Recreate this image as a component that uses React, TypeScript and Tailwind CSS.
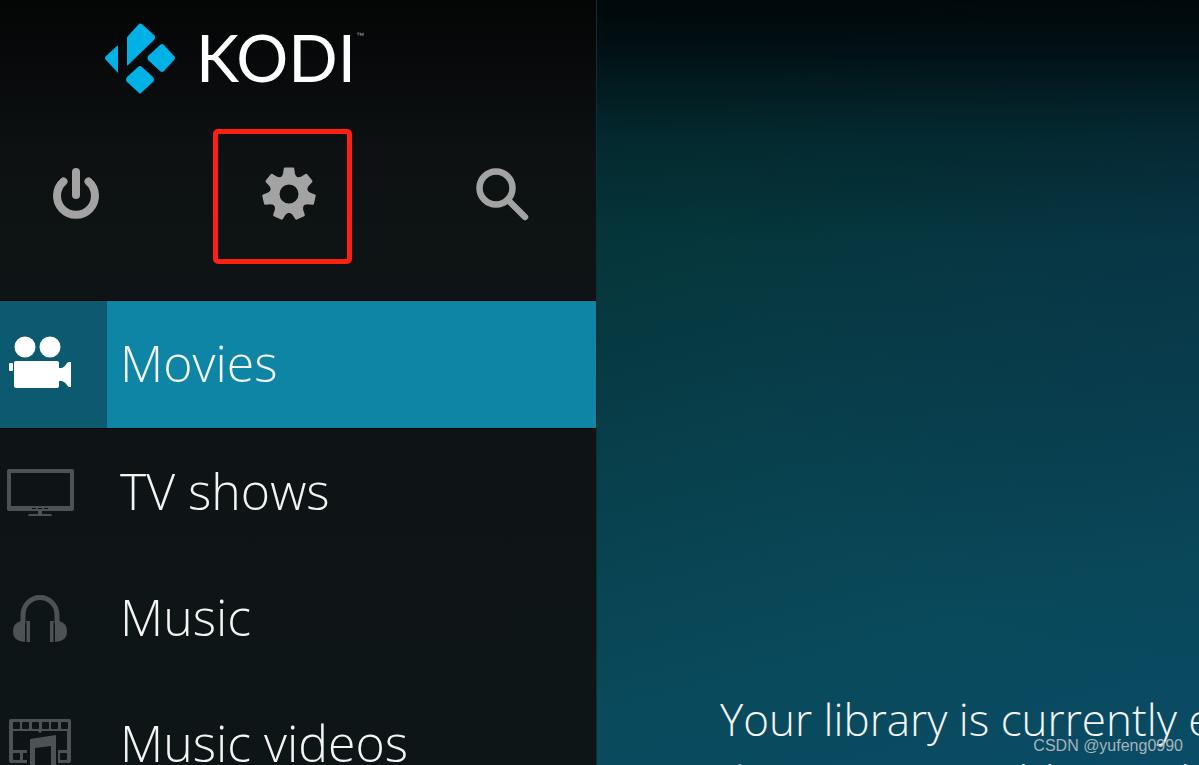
import type { ReactNode } from "react";

const navItems = [
  { label: "Movies", icon: <MovieIcon />, active: true },
  { label: "TV shows", icon: <TvIcon />, active: false },
  { label: "Music", icon: <HeadphonesIcon />, active: false },
  { label: "Music videos", icon: <MusicVideoIcon />, active: false },
];

function KodiMark() {
  return (
    <svg viewBox="0 0 72 72" className="size-[72px]" fill="#00b1e6" aria-hidden="true">
      <path d="M23 43V16Q23 15 24 14L34 3Q36 0 39 3L50 13Q52 15 50 18L24 43Q23 44 23 43Z" />
      <path d="M14 24V51L2 38Q0 36 2 34L13 24Q14 23 14 24Z" />
      <path d="M44 34L56 23Q58 21 60 23L70 34Q72 36 70 38L60 49Q58 51 56 49L44 38Q43 36 44 34Z" />
      <path d="M23 55L34 45Q36 43 38 45L49 55Q51 58 49 60L38 70Q36 73 34 70L23 60Q21 58 23 55Z" />
    </svg>
  );
}

function PowerIcon() {
  return (
    <svg viewBox="0 0 54 54" className="size-[54px]" fill="none" stroke="#a3a3a3" strokeWidth="8" strokeLinecap="round" aria-hidden="true">
      <path d="M27 5V28" />
      <path d="M14.500 14.500A19 19 0 1 0 39.500 14.500" />
    </svg>
  );
}

function GearIcon() {
  const teeth = [0, 1, 2, 3, 4, 5, 6];
  return (
    <svg viewBox="-27 -27 54 54" className="size-[54px]" fill="#a3a3a3" aria-hidden="true">
      <circle r="14" fill="none" stroke="#a3a3a3" strokeWidth="9" />
      {teeth.map((tooth) => (
        <path
          key={tooth}
          d="M-9 -16Q-6.500 -18 -6 -20L-5.300 -25.300Q-5.100 -26.500 -4 -26.500H4Q5.100 -26.500 5.300 -25.300L6 -20Q6.500 -18 9 -16Z"
          transform={`rotate(${(tooth * 360) / 7})`}
        />
      ))}
    </svg>
  );
}

function SearchIcon() {
  return (
    <svg viewBox="0 0 54 54" className="size-[54px]" fill="none" stroke="#a3a3a3" aria-hidden="true">
      <circle cx="21" cy="21" r="16.500" strokeWidth="6.500" />
      <path d="M33 33L50 50" strokeWidth="6.500" strokeLinecap="round" />
    </svg>
  );
}

function MovieIcon() {
  return (
    <svg viewBox="0 0 80 80" className="size-20" fill="#fff" aria-hidden="true">
      <circle cx="25" cy="22" r="10.500" />
      <circle cx="50" cy="22" r="10.500" />
      <rect x="14" y="36" width="45" height="27" rx="2" />
      <rect x="9" y="38" width="4" height="8" rx="1" />
      <path d="M58 43H61Q64 43 67 38Q68 37 69 37H71V62H69Q68 62 67 60Q64 56 61 56H58Z" />
    </svg>
  );
}

function TvIcon() {
  return (
    <svg viewBox="0 0 80 80" className="size-20" fill="#4d5254" aria-hidden="true">
      <path fillRule="evenodd" d="M9 17H72Q74 17 74 19V57Q74 59 72 59H9Q7 59 7 57V19Q7 17 9 17ZM11 21V54H70V21Z" />
      <path d="M38 58H42V62H50Q52 62 52 64H28Q28 62 30 62H38Z" />
      <path d="M32 56.500H36M38 56.500H42M44 56.500H48" stroke="#0e1415" />
    </svg>
  );
}

function HeadphonesIcon() {
  return (
    <svg viewBox="0 0 80 80" className="size-20" fill="#4d5254" aria-hidden="true">
      <path d="M23 46V37A17 17.500 0 0 1 57 37V46" fill="none" stroke="#4d5254" strokeWidth="5" />
      <path d="M25 43V64Q13 63 13 53.500Q13 45 21 43Z" />
      <path d="M55 43V64Q67 63 67 53.500Q67 45 59 43Z" />
      <path d="M26 43H30V64H26ZM50 43H54V64H50Z" />
      <path d="M26 44V64M54 44V64" stroke="#0e1415" strokeWidth="1" />
    </svg>
  );
}

function MusicVideoIcon() {
  const holes = [13, 22, 32, 42, 51, 61];
  return (
    <svg viewBox="0 -1 80 80" className="size-20" aria-hidden="true">
      <rect x="9" y="14" width="62" height="44" rx="2" fill="#4d5254" />
      {holes.map((x) => (
        <rect key={x} x={x} y="17" width="7" height="7" rx="1" fill="#0e1415" />
      ))}
      <path d="M13 26H38Q40 30 42 26H67V45H13Z" fill="#0e1415" />
      <rect x="13" y="48" width="7" height="7" rx="1" fill="#0e1415" />
      <rect x="60" y="48" width="7" height="7" rx="1" fill="#0e1415" />
      <path d="M23 48H27V44H58V59H27V55H23Z" fill="#0e1415" />
      <path d="M30 68V34L56 30V68H51V41L35 43V68Z" fill="#4d5254" />
    </svg>
  );
}

type ToolButtonProps = {
  label: string;
  highlighted?: boolean;
  children: ReactNode;
};

function ToolButton({ label, highlighted = false, children }: ToolButtonProps) {
  return (
    <button type="button" aria-label={label} className="relative flex h-[134px] w-[140px] items-center justify-center">
      {children}
      {highlighted && (
        <span className="absolute top-[2px] right-[7px] -bottom-[3px] -left-[6px] rounded-[5px] border-[5px] border-[#ff2010]" />
      )}
    </button>
  );
}

function Sidebar() {
  return (
    <aside className="w-[597px] shrink-0 border-r border-[#122e34] bg-[linear-gradient(180deg,#040505_0px,#080a0b_70px,#0d1112_150px,#0e1415_300px,#0e1517_765px)]">
      <header className="flex h-[127px] items-start gap-5 pt-[22px] pl-[104px]">
        <KodiMark />
        <div className="flex items-start text-white">
          <h1 className="font-['Lato',sans-serif] text-[65px] leading-[71px] font-normal">KODI</h1>
          <span className="pt-2 font-['Liberation_Sans',sans-serif] text-[8px] leading-3 text-gray-400">™</span>
        </div>
      </header>

      <div className="flex h-[173px] items-start justify-between pr-6 pl-[6px]">
        <ToolButton label="Power">
          <PowerIcon />
        </ToolButton>
        <ToolButton label="Settings" highlighted>
          <GearIcon />
        </ToolButton>
        <ToolButton label="Search">
          <SearchIcon />
        </ToolButton>
      </div>

      <nav>
        {navItems.map((item) => (
          <a
            key={item.label}
            href="#"
            className={
              item.active
                ? "flex h-[129px] items-stretch border-y border-black bg-[#0f85a5]"
                : "flex h-[126px] items-stretch"
            }
          >
            <span className={item.active ? "flex w-[107px] items-center bg-[#0b5a70]" : "flex w-[107px] items-center"}>
              {item.icon}
            </span>
            <span className="flex items-center pb-[3px] pl-[13px] text-[50px] leading-[64px] text-[#f4f4f4]">{item.label}</span>
          </a>
        ))}
      </nav>
    </aside>
  );
}

export default function App() {
  return (
    <div className="relative flex h-screen overflow-hidden bg-[#084354] font-['Open_Sans','Noto_Sans',sans-serif] font-light">
      <Sidebar />
      <main className="flex min-w-0 flex-1 flex-col justify-end bg-[linear-gradient(180deg,rgba(0,6,8,0.95)_0px,rgba(0,7,10,0.82)_40px,rgba(0,10,14,0.58)_85px,rgba(0,15,20,0.27)_140px,transparent_240px),radial-gradient(circle_at_100%_25%,rgba(8,40,66,0.35),transparent_60%),linear-gradient(165deg,#043034_0%,#05363b_28%,#083f4b_50%,#094a5c_78%,#0a4b66_100%)]">
        <p className="h-[77px] overflow-hidden text-[44px] leading-[62px] whitespace-nowrap text-[#f4f4f4]">
          <span className="block pl-[123px]">Your library is currently empty.</span>
          <span className="block pl-[90px]">"Files" section, add a media source</span>
        </p>
      </main>
      <span className="absolute right-4 bottom-[7px] font-['Liberation_Sans',sans-serif] text-[16px] leading-6 font-normal text-[#a5b5bd]">
        CSDN @yufeng0990
      </span>
    </div>
  );
}
